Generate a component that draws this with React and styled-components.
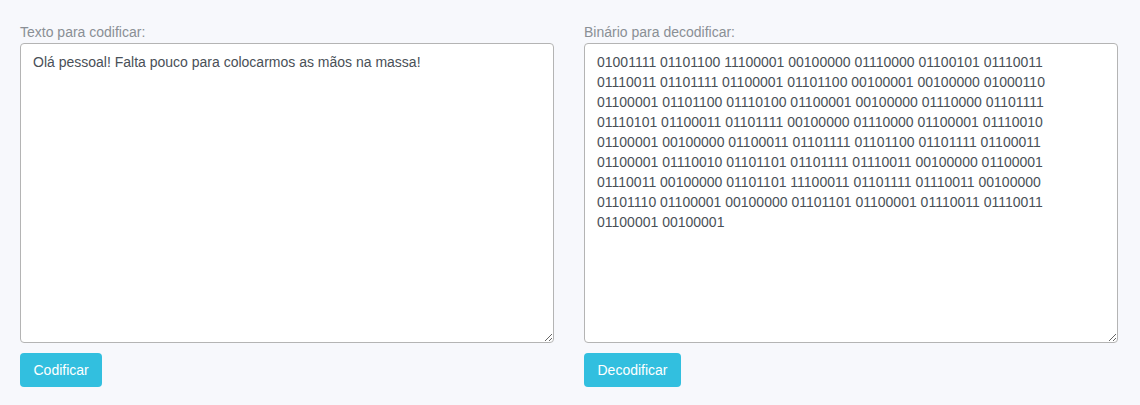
import React from "react";
import styled, { createGlobalStyle } from "styled-components";

const binary =
  "01001111 01101100 11100001 00100000 01110000 01100101 01110011 01110011 01101111 01100001 01101100 00100001 00100000 01000110 01100001 01101100 01110100 01100001 00100000 01110000 01101111 01110101 01100011 01101111 00100000 01110000 01100001 01110010 01100001 00100000 01100011 01101111 01101100 01101111 01100011 01100001 01110010 01101101 01101111 01110011 00100000 01100001 01110011 00100000 01101101 11100011 01101111 01110011 00100000 01101110 01100001 00100000 01101101 01100001 01110011 01110011 01100001 00100001";

const GlobalStyle = createGlobalStyle`
  html, body {
    margin: 0;
    background: #f7f8fc;
    font-family: "Liberation Sans", Arial, sans-serif;
  }
`;

const App = () => {
  return (
    <>
      <GlobalStyle />
      <Page>
        <Column>
          <Label>Texto para codificar:</Label>
          <TextBox defaultValue="Olá pessoal! Falta pouco para colocarmos as mãos na massa!" />
          <Button>Codificar</Button>
        </Column>
        <Column>
          <Label>Binário para decodificar:</Label>
          <TextBox defaultValue={binary} />
          <Button>Decodificar</Button>
        </Column>
      </Page>
    </>
  );
};

export default App;

const Page = styled.div`
  display: grid;
  grid-template-columns: 534px 534px;
  column-gap: 30px;
  padding: 22px 20px 0;
  height: 405px;
  box-sizing: border-box;
`;

const Column = styled.div`
  display: flex;
  flex-direction: column;
  align-items: flex-start;
`;

const Label = styled.label`
  font-size: 14px;
  line-height: 20px;
  color: #8a8f95;
  margin-bottom: 1px;
`;

const TextBox = styled.textarea`
  box-sizing: border-box;
  width: 100%;
  height: 300px;
  margin: 0;
  padding: 8px 16px 8px 12px;
  border: 1px solid #b4b4b4;
  border-radius: 4px;
  background: #fff;
  color: #495057;
  font-family: "Liberation Sans", Arial, sans-serif;
  font-size: 14px;
  line-height: 20px;
  resize: vertical;
  outline: none;
`;

const Button = styled.button`
  margin-top: 10px;
  height: 34px;
  padding: 0 13.5px;
  border: none;
  border-radius: 4px;
  background: #32bfdf;
  color: #fff;
  font-family: "Liberation Sans", Arial, sans-serif;
  font-size: 14px;
  cursor: pointer;
`;
